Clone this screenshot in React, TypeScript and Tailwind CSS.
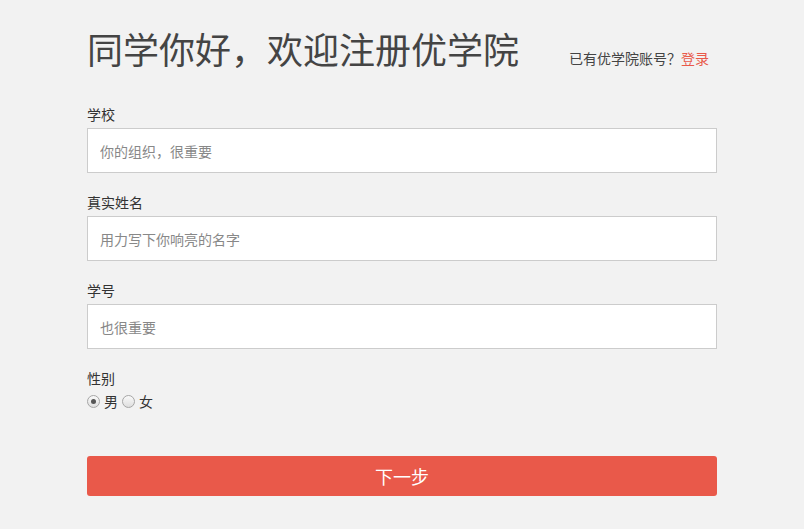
import React from "react";

const font = { fontFamily: '"Noto Sans CJK SC", "Noto Sans", sans-serif' };

function Field({ label, placeholder }: { label: string; placeholder: string }) {
  return (
    <div className="flex flex-col">
      <label className="h-5 text-[14px] leading-5 text-[#333]">{label}</label>
      <input
        placeholder={placeholder}
        className="mt-1 h-[45px] w-full border border-[#cccccc] bg-white px-3 text-[14px] text-[#333] outline-none placeholder:text-[#888]"
      />
    </div>
  );
}

function Radio({ checked }: { checked?: boolean }) {
  return (
    <span className="flex h-[13px] w-[13px] items-center justify-center rounded-full border border-[#a6a6a6] bg-gradient-to-b from-[#fafafa] to-[#dedede]">
      {checked && <span className="h-[5px] w-[5px] rounded-full bg-[#555]" />}
    </span>
  );
}

export default function App() {
  return (
    <div className="min-h-[529px] w-full bg-[#f2f2f2]" style={font}>
      <div className="mx-auto w-[630px] pt-[24px]">
        <div className="flex items-end justify-between pr-2">
          <h1 className="text-[36px] leading-[48px] font-normal text-[#444]">同学你好，欢迎注册优学院</h1>
          <div className="mb-[4px] text-[14px] leading-5 text-[#444]">
            已有优学院账号？<a className="text-[#e9594a]">登录</a>
          </div>
        </div>
        <div className="mt-[32px] flex flex-col gap-[19px]">
          <Field label="学校" placeholder="你的组织，很重要" />
          <Field label="真实姓名" placeholder="用力写下你响亮的名字" />
          <Field label="学号" placeholder="也很重要" />
          <div className="flex flex-col">
            <div className="h-5 text-[14px] leading-5 text-[#333]">性别</div>
            <div className="mt-[3px] flex items-center text-[14px] leading-5 text-[#333]">
              <Radio checked />
              <span className="ml-[4px]">男</span>
              <span className="ml-[4px]"><Radio /></span>
              <span className="ml-[4px]">女</span>
            </div>
          </div>
        </div>
        <button className="mt-[45px] flex h-[40px] w-full items-center justify-center rounded-[3px] bg-[#e9594a] text-[18px] text-white">
          下一步
        </button>
      </div>
    </div>
  );
}
